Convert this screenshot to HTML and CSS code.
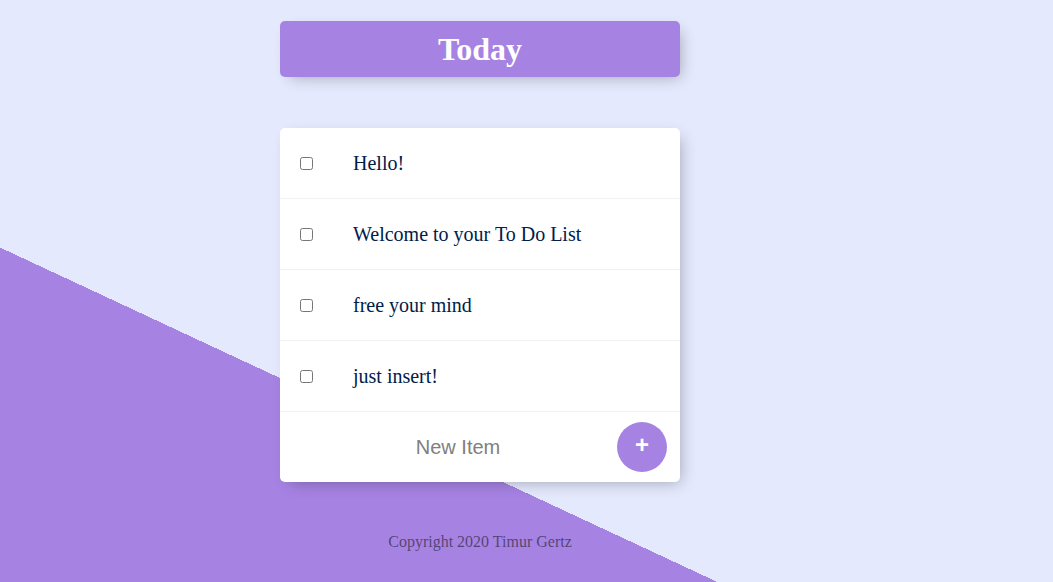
FILE: index.html
```html
<!DOCTYPE html>
<html>
<head>
<meta charset="utf-8">
<title>To Do List</title>
<link rel="stylesheet" href="styles.css">
</head>
<body>
<div class="page">
  <div class="heading">
    <h1 class="title">Today</h1>
  </div>
  <div class="card">
    <div class="item"><input class="check" type="checkbox"><p class="text">Hello!</p></div>
    <div class="item"><input class="check" type="checkbox"><p class="text">Welcome to your To Do List</p></div>
    <div class="item"><input class="check" type="checkbox"><p class="text">free your mind</p></div>
    <div class="item"><input class="check" type="checkbox"><p class="text">just insert!</p></div>
    <form class="add-form">
      <input class="new-item" type="text" name="newItem" placeholder="New Item" autocomplete="off">
      <button class="add-btn" type="button">+</button>
    </form>
  </div>
  <footer class="footer">Copyright 2020 Timur Gertz</footer>
</div>
</body>
</html>
```
FILE: styles.css
```css
html {
  background-color: #E4E9FD;
  background-image: linear-gradient(25deg, #A683E3 50%, #E4E9FD 50%);
  background-size: 100% 986px;
  background-repeat: no-repeat;
  min-height: 100%;
}
body {
  margin: 0;
  font-family: "Liberation Serif", "Times New Roman", serif;
}
.page {
  width: 400px;
  margin-left: 280px;
  padding-top: 21px;
  display: flex;
  flex-direction: column;
}
.heading {
  background-color: #A683E3;
  border-radius: 5px;
  box-shadow: 5px 5px 15px -5px rgba(0, 0, 0, 0.3);
  text-align: center;
}
.title {
  margin: 0;
  padding: 10px;
  font-size: 32px;
  line-height: 36px;
  font-weight: bold;
  color: #fff;
}
.card {
  margin-top: 51px;
  background: #fff;
  border-radius: 5px;
  box-shadow: 5px 5px 15px -5px rgba(0, 0, 0, 0.3);
}
.item {
  min-height: 70px;
  display: flex;
  align-items: center;
  border-bottom: 1px solid #F1F1F1;
}
.check {
  margin: 0 20px;
  width: 13px;
  height: 13px;
}
.text {
  margin: 0;
  padding: 20px;
  font-size: 20px;
  color: #00204a;
}
.add-form {
  height: 70px;
  display: flex;
  align-items: center;
  margin-left: 20px;
  gap: 9px;
}
.new-item {
  width: 308px;
  height: 60px;
  box-sizing: border-box;
  border: none;
  padding: 0 2px 0 10px;
  text-align: center;
  font-family: "Liberation Sans", Arial, sans-serif;
  font-size: 20px;
  color: #000;
  background: transparent;
}
.new-item::placeholder {
  color: grey;
  opacity: 1;
}
.new-item:focus {
  outline: none;
}
.add-btn {
  width: 50px;
  height: 50px;
  border-radius: 50%;
  border: 0;
  background-color: #A683E3;
  color: #fff;
  font-family: "Liberation Sans", Arial, sans-serif;
  font-size: 24px;
  font-weight: bold;
  line-height: 1;
  padding: 0 0 5px 0;
}
.footer {
  margin-top: 51px;
  text-align: center;
  font-size: 16px;
  line-height: 18px;
  color: rgba(0, 0, 0, 0.5);
}
```
